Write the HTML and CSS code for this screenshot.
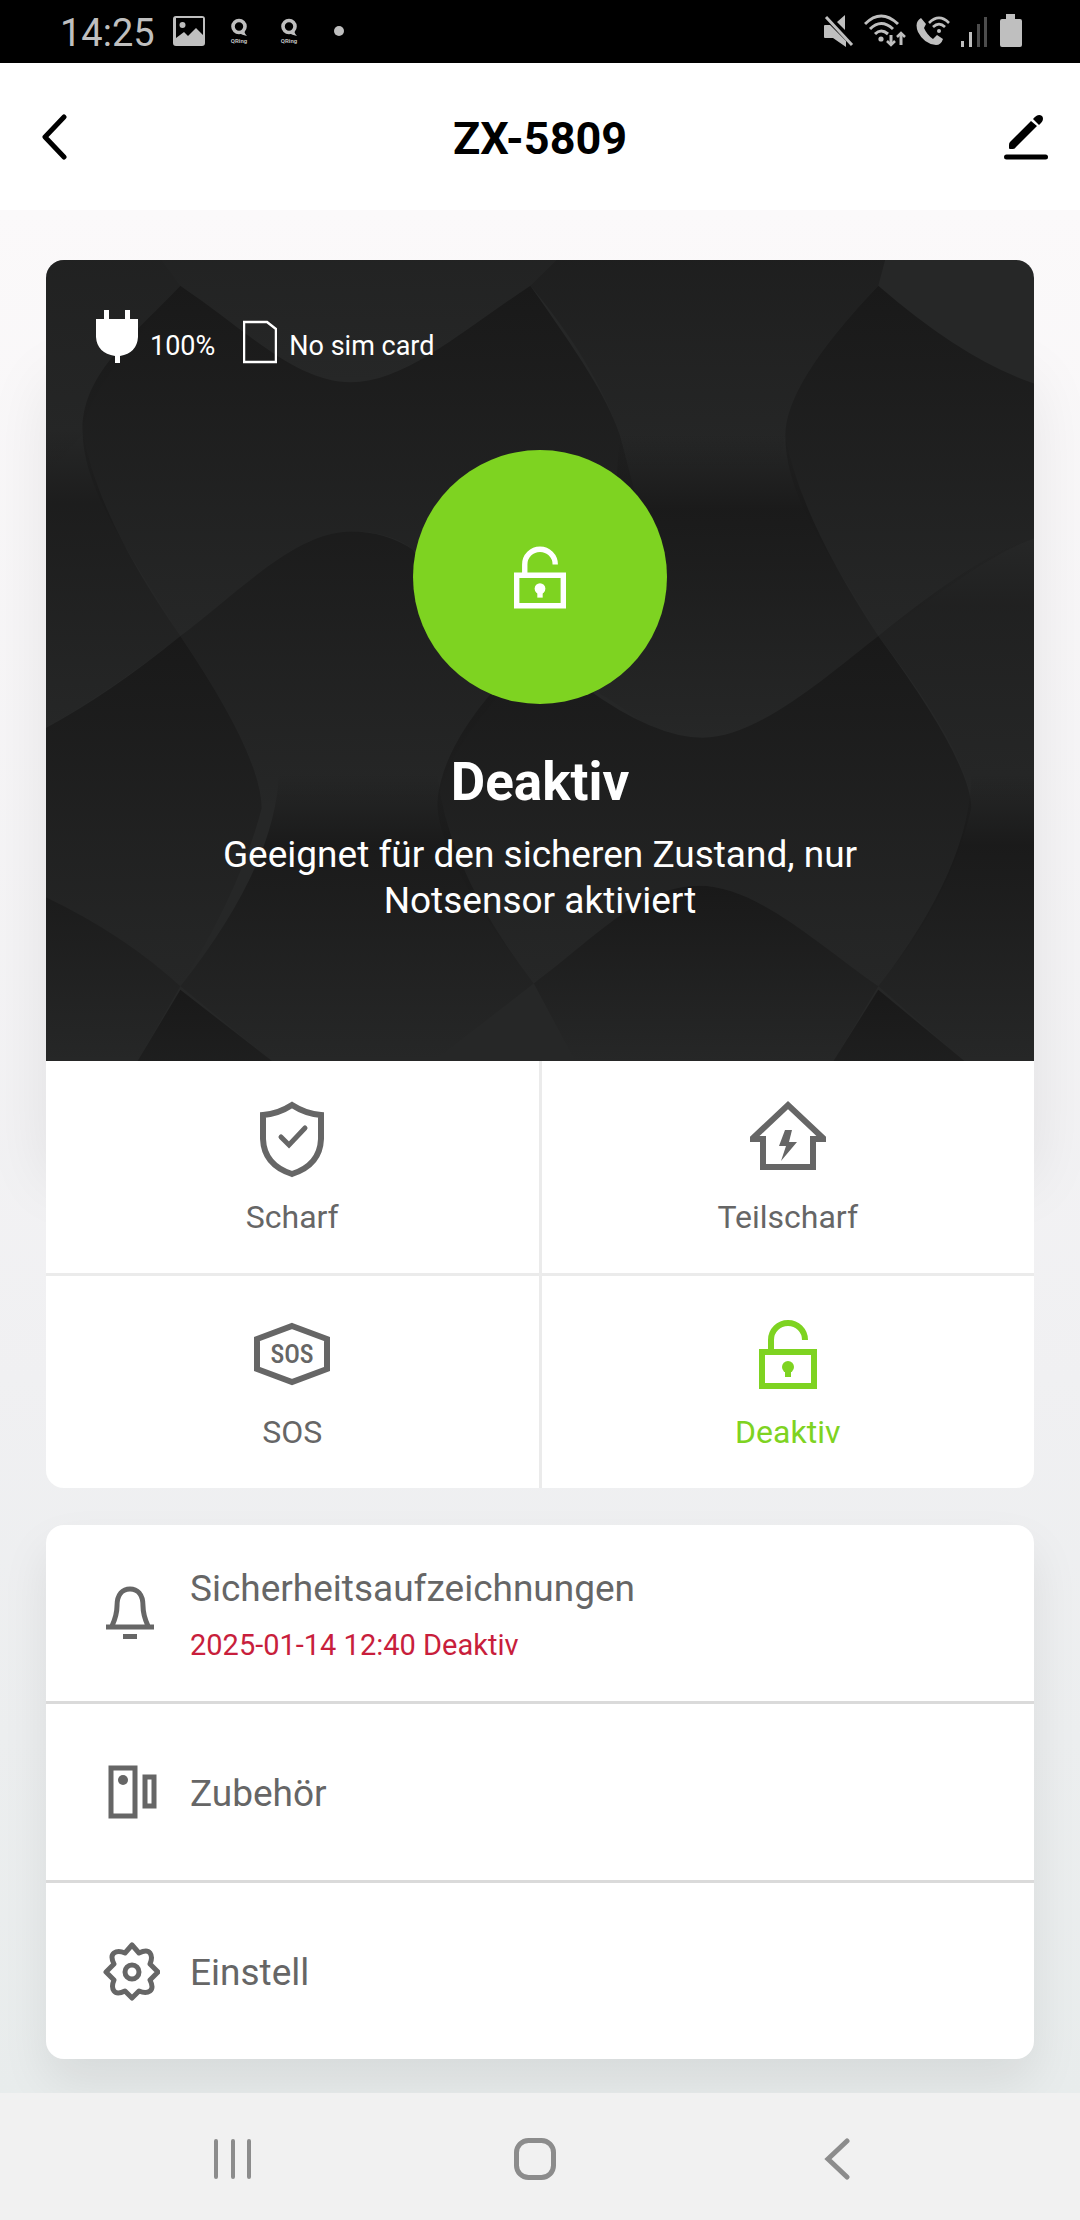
FILE: index.html
```html
<!DOCTYPE html>
<html lang="de">
<head>
<meta charset="utf-8">
<meta name="viewport" content="width=device-width, initial-scale=1">
<title>ZX-5809</title>
<link rel="stylesheet" href="styles.css">
</head>
<body>
<div class="status">
  <span class="status-time">14:25</span>
  <div class="status-left">
    <svg class="st-image" viewBox="0 0 32 30"><path fill-rule="evenodd" d="M3 0H29Q32 0 32 3V27Q32 30 29 30H3Q0 30 0 27V3Q0 0 3 0ZM3 2V22L11 16L15 20L23 12L30 19V2Z"/><circle cx="9.500" cy="9" r="3"/></svg>
    <svg class="st-ring" viewBox="0 0 18 26"><circle cx="9" cy="8.500" r="6" fill="none" stroke="currentColor" stroke-width="3.600"/><path d="M9 13H14Q15 16 17 18Q12 17 9 15Z"/><text x="9" y="25" text-anchor="middle" class="ring-text">QRing</text></svg>
    <svg class="st-ring" viewBox="0 0 18 26"><circle cx="9" cy="8.500" r="6" fill="none" stroke="currentColor" stroke-width="3.600"/><path d="M9 13H14Q15 16 17 18Q12 17 9 15Z"/><text x="9" y="25" text-anchor="middle" class="ring-text">QRing</text></svg>
    <span class="st-dot"></span>
  </div>
  <div class="status-right">
    <svg width="30" height="34" viewBox="0 0 30 34"><path d="M1 11H6L22 27V33L9 24H1Q0 24 0 23V12Q0 11 1 11ZM21 1V16L13 8Z"/><path d="M2 3L28 31" stroke="currentColor" stroke-width="3"/></svg>
    <svg width="42" height="34" viewBox="0 0 42 34"><g fill="none" stroke="currentColor" stroke-width="3"><path d="M1 10Q17 -6 34 10M6 15Q17 4 29 15M11 20Q17 14 24 20M27 21V31M37 31V20"/><path d="M23 27L27 31L31 27M33 23L37 19L41 23" stroke-width="2.500"/></g><circle cx="17" cy="25" r="2.600"/></svg>
    <svg width="34" height="34" viewBox="0 0 34 34"><path d="M5 4L10 10L8 14Q11 21 17 25L21 21L27 25Q25 31 20 31Q8 30 2 18Q-2 8 5 4Z"/><g fill="none" stroke="currentColor" stroke-width="2.600"><path d="M13 9Q23 -1 33 9M17 13Q23 7 29 13"/></g><circle cx="23" cy="17" r="2"/></svg>
    <svg width="30" height="34" viewBox="0 0 30 34"><path d="M1 27H4V33H1ZM9 18H12V33H9Z"/><path d="M17 10H20V33H17ZM24 3H27V33H24Z" opacity=".4"/></svg>
    <svg width="22" height="34" viewBox="0 0 22 34"><path d="M6 0H15V5H20Q22 5 22 7V31Q22 33 20 33H2Q0 33 0 31V7Q0 5 2 5H6Z"/></svg>
  </div>
</div>

<header class="topbar">
  <button class="icon-btn" type="button" aria-label="Zurück"><svg width="28" height="46" viewBox="0 0 28 46"><path d="M24 3L5 23L24 43" fill="none" stroke="currentColor" stroke-width="5" stroke-linecap="round" stroke-linejoin="round"/></svg></button>
  <h1>ZX-5809</h1>
  <button class="icon-btn" type="button" aria-label="Bearbeiten"><svg width="44" height="46" viewBox="0 0 44 46"><path d="M2.500 43H41.500" stroke="currentColor" stroke-width="5" stroke-linecap="round"/><path d="M6 28L27 7L33 12L12 33Q11 35 9 35H6Q5 35 5 34V31Q5 29 6 28Z"/><path d="M29 5Q34 -1 38 2Q41 6 35 11Z"/></svg></button>
</header>

<main class="content">
  <section class="card">
    <div class="hero">
      <svg class="hero-pattern" viewBox="67 105 1434 1395" preserveAspectRatio="none" aria-hidden="true">
        <defs>
          <linearGradient id="fade" x1="0" y1="0" x2="0" y2="1"><stop offset="0" stop-color="#191919"/><stop offset="1" stop-color="#191919" stop-opacity="0"/></linearGradient>
          <linearGradient id="swell" x1="0" y1="0" x2="0" y2="1"><stop offset="0" stop-color="#191919" stop-opacity="0"/><stop offset=".25" stop-color="#191919" stop-opacity=".9"/><stop offset="1" stop-color="#191919" stop-opacity="0"/></linearGradient>
        </defs>
        <rect x="67" y="105" width="1434" height="1395" fill="#262727"/>
        <g fill="url(#fade)">
          <path opacity=".4" d="M67 105H235L262 150Q120 340 120 410L67 480Z"/>
          <path opacity=".3" d="M235 105H808L770 150C680 220 600 318 510 318S360 230 262 150Z"/>
          <path d="M262 150C360 230 430 318 510 318S680 220 770 150C840 270 880 340 900 410L950 640L600 610C580 590 550 578 510 578C430 578 350 680 262 760C180 600 120 500 120 400S200 230 262 150Z"/>
          <path opacity=".6" d="M770 150L808 105H1285L1275 150Q1140 320 1140 410L1130 470H910L900 410C880 340 840 250 770 150Z"/>
          <path d="M1275 150Q1400 280 1501 320V590C1430 620 1350 700 1275 760C1220 640 1140 530 1140 410Q1140 320 1275 150Z"/>
          <path opacity=".8" d="M262 760C350 680 430 578 510 578Q560 578 600 610L720 870Q640 980 635 1060H380Q380 970 262 760Z"/>
          <path d="M720 850H850Q950 937 1020 937C1100 937 1200 830 1275 760Q1410 980 1410 1060Q1380 1220 1275 1370C1190 1300 1100 1195 1015 1195S870 1280 775 1365Q635 1150 635 1050Q640 960 720 850Z"/>
          <path d="M67 920Q160 860 262 760Q380 970 380 1060Q350 1200 262 1370Q180 1280 67 1215Z"/>
          <path d="M775 1365C870 1280 930 1195 1015 1195S1190 1300 1275 1370L1210 1500H835Z"/>
          <path d="M262 1376L395 1500V1700H200V1500Z"/>
          <path d="M1275 1376L1400 1500V1700H1210V1500Z"/>
          <path opacity=".8" d="M67 1215Q180 1280 262 1370L200 1500H67Z"/>
        </g>
        <g fill="url(#swell)">
          <path opacity=".8" d="M67 400H120Q140 550 262 760Q180 840 67 920Z"/>
          <path d="M900 410H1140Q1160 550 1275 760C1200 830 1100 937 1020 937S930 900 870 860Z"/>
          <path opacity=".5" d="M1275 760Q1430 610 1501 590V1060H1410Q1410 970 1275 760Z"/>
          <path d="M405 1000H635Q650 1170 775 1365L630 1500H395L262 1370Q400 1160 405 1000Z"/>
          <path d="M1410 1000H1501V1500H1400L1275 1370Q1410 1160 1410 1000Z"/>
        </g>
      </svg>
      <div class="hero-info">
        <svg width="42" height="54" viewBox="0 0 42 54"><path d="M8 0H13V9H29V0H34V9H42V27Q41 43 24 46V53H19V46Q1 43 0 27V9H8Z"/></svg>
        <span class="power">100%</span>
        <svg width="34" height="44" viewBox="0 0 34 44"><path d="M1 2H24L33 9V42H1Z" fill="none" stroke="currentColor" stroke-width="2.500"/></svg>
        <span>No sim card</span>
      </div>
      <div class="hero-state">
        <div class="badge"><svg width="52" height="64" viewBox="0 0 58 70"><g fill="none" stroke="currentColor" stroke-width="6"><path d="M3 33H55V67H3Z"/><path d="M12 32V21A17 17 0 0 1 46 21"/></g><circle cx="29" cy="48" r="6"/><path d="M26 48H32V58H26Z"/></svg></div>
        <h2>Deaktiv</h2>
        <p>Geeignet für den sicheren Zustand, nur Notsensor aktiviert</p>
      </div>
    </div>
    <div class="modes">
      <button type="button" class="mode"><svg width="80" height="80" viewBox="0 0 80 80"><g fill="none" stroke="currentColor" stroke-width="6"><path d="M40 6Q54 15 69 16V40Q68 66 40 75Q12 66 11 40V16Q26 15 40 6Z"/><path d="M29 38L37 46L53 29" stroke-width="5" stroke-linecap="round" stroke-linejoin="miter"/></g></svg><span>Scharf</span></button>
      <button type="button" class="mode"><svg width="80" height="80" viewBox="0 0 80 80"><path d="M15 40H5V39L40 6L75 39V40H65V68H15V37M65 37V40" fill="none" stroke="currentColor" stroke-width="6"/><path d="M37 31H44L41 43H49L33 62L38 47H31Z"/></svg><span>Teilscharf</span></button>
      <button type="button" class="mode"><svg width="80" height="80" viewBox="0 0 80 80"><path d="M40 12L75 25V55L40 68L5 55V25Z" fill="none" stroke="currentColor" stroke-width="6"/><text x="40" y="49" text-anchor="middle" class="sos-text">SOS</text></svg><span>SOS</span></button>
      <button type="button" class="mode is-active"><svg width="80" height="80" viewBox="-11 -5 80 80"><g fill="none" stroke="currentColor" stroke-width="6"><path d="M3 33H55V67H3Z"/><path d="M12 32V21A17 17 0 0 1 46 21"/></g><circle cx="29" cy="48" r="6"/><path d="M26 48H32V58H26Z"/></svg><span>Deaktiv</span></button>
    </div>
  </section>

  <nav class="card list">
    <a class="row" href="#records"><svg width="60" height="60" viewBox="0 0 60 60"><path d="M6 44H54M12 43Q17 32 17 23C17 11 23 6 30 6S43 11 43 23Q43 32 48 43" fill="none" stroke="currentColor" stroke-width="5"/><path d="M23 51H37V56H23Z"/></svg><span class="row-text"><span>Sicherheitsaufzeichnungen</span><span class="row-note">2025-01-14 12:40 Deaktiv</span></span></a>
    <a class="row" href="#accessories"><svg width="60" height="60" viewBox="0 0 60 60"><path d="M11 6H35V54H11ZM45 15H54V44H45Z" fill="none" stroke="currentColor" stroke-width="5"/><circle cx="23" cy="18" r="5"/></svg><span class="row-text">Zubehör</span></a>
    <a class="row" href="#settings"><svg width="60" height="60" viewBox="-1 0 60 60"><g fill="none" stroke="currentColor" stroke-width="5" stroke-linejoin="round"><path d="M31 4L38 12Q46 8 49 12T49 23L57 31L49 39Q53 47 49 50T38 50L31 57L24 50Q16 54 13 50T13 39L5 31L13 23Q9 15 13 12T24 12Z"/><circle cx="31" cy="31" r="7"/></g></svg><span class="row-text">Einstell</span></a>
  </nav>
</main>

<footer class="navbar">
  <button type="button" aria-label="Letzte Apps"><svg width="42" height="42" viewBox="0 0 42 42"><path d="M4 3V39M21 3V39M37 3V39" stroke="currentColor" stroke-width="4" stroke-linecap="round"/></svg></button>
  <button type="button" aria-label="Startseite"><svg width="42" height="42" viewBox="0 0 42 42"><rect x="2.500" y="2.500" width="37" height="37" rx="12" fill="none" stroke="currentColor" stroke-width="5"/></svg></button>
  <button type="button" aria-label="Zurück"><svg width="42" height="42" viewBox="0 0 42 42"><path d="M31 3L12 21L31 39" fill="none" stroke="currentColor" stroke-width="5" stroke-linecap="round"/></svg></button>
</footer>
</body>
</html>
```
FILE: styles.css
```css
* { box-sizing: border-box; }

body {
  margin: 0;
  min-height: 100vh;
  display: flex;
  flex-direction: column;
  font-family: Roboto, "Liberation Sans", sans-serif;
  color: #666;
  background: #f1f1f1;
}

svg { display: block; flex: none; fill: currentColor; }

button {
  margin: 0;
  padding: 0;
  border: 0;
  background: none;
  font: inherit;
  color: inherit;
  cursor: pointer;
}

h1, h2, p { margin: 0; }

/* Status bar */
.status {
  display: flex;
  align-items: center;
  height: 63px;
  padding: 0 58px 2px 60px;
  background: #000;
  color: #bfbfbf;
}
.status-time { font-size: 38px; line-height: 44px; padding-top: 4px; }
.status-left {
  display: flex;
  align-items: center;
  flex: 1;
  gap: 32px;
  margin-left: 18px;
}
.st-image { width: 32px; height: 30px; margin-right: -7px; }
.st-ring { width: 18px; height: 26px; }
.ring-text { font-size: 6px; font-weight: 700; }
.st-dot { width: 10px; height: 10px; margin-left: 4px; border-radius: 50%; background: currentColor; }
.status-right { display: flex; align-items: center; gap: 10px; }

/* Title bar */
.topbar {
  display: flex;
  align-items: center;
  justify-content: space-between;
  height: 147px;
  padding: 0 32px;
  background: #fff;
  color: #000;
}
.topbar h1 { padding-top: 4px; font-size: 45px; line-height: 54px; font-weight: 700; }
.icon-btn { width: 44px; }
.icon-btn svg { margin: 0 auto; }

/* Content */
.content {
  flex: 1;
  display: flex;
  flex-direction: column;
  gap: 37px;
  padding: 50px 46px 34px;
  background: linear-gradient(#fbf9fa, #f0f0f2 62%, #e8ecec);
  overflow: hidden;
}
.card {
  border-radius: 18px;
  background: #fff;
}

.hero {
  position: relative;
  border-radius: 18px 18px 0 0;
  overflow: hidden;
  padding: 50px 50px 137px;
  color: #fff;
  box-shadow: 0 120px 64px rgba(0, 0, 0, .08);
}
.hero-pattern { position: absolute; inset: 0; width: 100%; height: 100%; }
.hero-info {
  position: relative;
  display: flex;
  align-items: flex-end;
  gap: 12px;
  font-size: 27px;
  line-height: 36px;
}
.power { margin-right: 16px; }
.hero-state {
  position: relative;
  display: flex;
  flex-direction: column;
  align-items: center;
  padding-top: 86px;
  text-align: center;
}
.badge {
  display: grid;
  place-items: center;
  width: 254px;
  height: 254px;
  border-radius: 50%;
  background: #7ed321;
}
.hero-state h2 { margin-top: 44px; font-size: 53px; line-height: 68px; font-weight: 700; }
.hero-state p { max-width: 660px; margin-top: 16px; font-size: 37px; line-height: 46px; }

/* Mode buttons */
.modes {
  position: relative;
  display: grid;
  grid-template-columns: 1fr 1fr;
  gap: 3px;
  background: #ebebeb;
  border-radius: 0 0 18px 18px;
  overflow: hidden;
}
.mode {
  display: flex;
  flex-direction: column;
  align-items: center;
  gap: 18px;
  padding: 38px 0 36px;
  background: #fff;
  font-size: 32px;
  line-height: 40px;
}
.mode.is-active { color: #7ed321; }
.sos-text { font-family: "Roboto Condensed", "Liberation Sans Narrow", Roboto, sans-serif; font-size: 26px; font-weight: 500; }

/* List */
.list { box-shadow: 0 24px 48px rgba(0, 16, 8, .08); }
.row {
  display: flex;
  align-items: center;
  gap: 30px;
  height: 176px;
  padding: 0 54px;
  color: inherit;
  text-decoration: none;
  font-size: 37px;
  line-height: 48px;
}
.row + .row { border-top: 3px solid #dadada; height: 179px; }
.row-text { display: flex; flex-direction: column; gap: 12px; padding-top: 3px; }
.row-note { font-size: 29px; line-height: 40px; color: #c81e3c; }

/* System navigation */
.navbar {
  display: grid;
  grid-template-columns: repeat(3, 1fr);
  height: 127px;
  padding: 4px 92px 0 82px;
  background: #f1f1f1;
  color: #8c8c8c;
}
.navbar button { display: grid; place-items: center; }
```
